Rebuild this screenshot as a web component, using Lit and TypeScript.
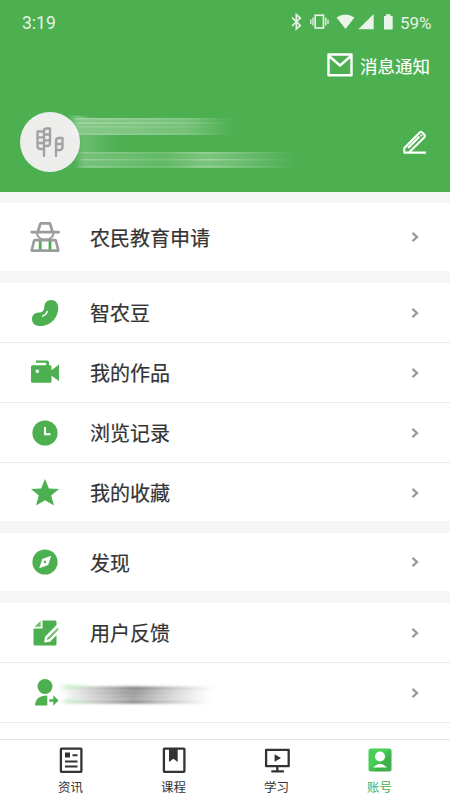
import { LitElement, html, svg, css, type TemplateResult } from "lit";
import { customElement } from "lit/decorators.js";

const G = "#4caf50";

const icons: Record<string, TemplateResult> = {
  farmer: svg`<g fill="none" stroke="#9c9c9c" stroke-width="2.700" stroke-linejoin="round" stroke-linecap="round">
    <path d="M-4.800 4v9M5 4v9" stroke="#4caf50" stroke-width="2.800" stroke-linecap="butt"/>
    <path d="M-8.200-4.500C-7.500 5 8 5 8.700-4.500" stroke-width="2.200"/>
    <path d="M-13.300-4.800h27M-7-5.500l2.200-7.500q.3-.6 1-.6h8q.7 0 1 .6l2.200 7.500"/>
    <path d="M-9.700 3.200h19.700q.8 0 1 .8l2.300 9.600h-26.600l2.300-9.600q.2-.8 1-.8z"/></g>`,
  bean: svg`<path fill=${G} d="M6-13c4.500 0 7.200 3.300 7.200 8.200C13.200 4.800 5.500 13-4.600 13-9.800 13-13 10.300-13 6.200c0-4 2.800-6.600 6.800-6.700C-2.700-.6-1-2.200-.8-5.500-.6-10.300 2.300-13 6-13z"/>
    <path d="M-2.200 3Q1.200 2 2.300-1.600" fill="none" stroke="#fff" stroke-width="1.500" stroke-linecap="round"/>`,
  camera: svg`<path fill=${G} fill-rule="evenodd" d="M-9-12.500H2q2 0 2 2v2.800h1q1.500 0 1.500 1.500v3.400L14-8.500v16.500l-7.500-5.300v5.500q0 1.500-1.500 1.500h-17.500q-1.500 0-1.500-1.500V-6.200q0-1.500 1.500-1.500h13.700v-2.500H-9zM-9.200-3.200v3h3v-3z"/>`,
  clock: svg`<circle r="12.600" fill=${G}/><path d="M0-6V1.200H5.500" fill="none" stroke="#fff" stroke-width="2"/>`,
  star: svg`<path fill=${G} d="M0-14L3.900-4.500 14-4 6.200 2.600 9 12.500 0 7.200-9 12.500-6.200 2.600-14-4-3.900-4.500z"/>`,
  compass: svg`<circle r="12.600" fill=${G}/><path d="M6.200-6.200L3.200 3-5.800 6.200-2.700-3z" fill="#fff"/><circle r="1.200" fill=${G}/>`,
  note: svg`<path fill=${G} d="M-2.500-12.500H10q1.500 0 1.500 1.500v3L0 3.800-.8 9.500 5 8.800 11.500 2.300V11q0 1.500-1.500 1.500h-20q-1.500 0-1.500-1.500V-4.500h9z"/>
    <path fill=${G} d="M-4.300-12.200v6h-6.200zM12.300-4.800q1.200 0 1.300 1.300L4.200 6.300 1.600 7 2.200 4.900z" opacity=".8"/>`,
  userOut: svg`<g fill=${G}><circle cx="0" cy="-6.500" r="7.500"/><path d="M-10 12.500Q-9.500 2.500 2.300 2.500V12.500zM4.300 6.200h4v-4l5.200 5.300-5.200 5.300v-4h-4z"/></g>`,
};

const tabIcons: TemplateResult[] = [
  svg`<g fill="none" stroke="#333" stroke-width="2.300"><rect x="-10.100" y="-11.300" width="20.500" height="23.200" rx=".6"/>
    <path d="M1.500-4.800h5M-6 1.500H6.500M-6 6.500H6.500" stroke-width="2"/><path fill="#333" stroke="none" d="M-6-7.500h5v5h-5z"/></g>`,
  svg`<rect x="-10.100" y="-11.300" width="20.500" height="23.200" rx=".6" fill="none" stroke="#333" stroke-width="2.300"/>
    <path fill="#333" d="M-5-11.300h8.700V2L-.6-1.200-5 2z"/>`,
  svg`<g transform="translate(.3 0)"><path d="M-11.200-10.200H11.400V6.200H-11.200zM0 6v5M-6 11.300H6.600" fill="none" stroke="#333" stroke-width="2.300" stroke-linejoin="round"/>
    <path fill="#333" d="M-2.700-5.700V1.700L3.700-2z"/></g>`,
  svg`<defs><linearGradient id="tile" x2="1" y2="1"><stop offset=".4" stop-color="#48cf57"/><stop offset=".65" stop-color="#3faf49"/></linearGradient></defs>
    <rect x="-11.500" y="-11.500" width="23" height="23" rx="2.500" fill="url(#tile)"/>
    <circle cy="-3.500" r="5" fill="#fff"/><path d="M-7 7.500Q0 .2 7 7.500z" fill="#fff"/>`,
];

const groups = [
  [["farmer", "农民教育申请"]],
  [["bean", "智农豆"], ["camera", "我的作品"], ["clock", "浏览记录"], ["star", "我的收藏"]],
  [["compass", "发现"]],
  [["note", "用户反馈"], ["userOut", ""]],
];
const tabs = ["资讯", "课程", "学习", "账号"];

@customElement("app-root")
export class AppRoot extends LitElement {
  static styles = css`
    :host { display: flex; flex-direction: column; width: 450px; height: 800px; overflow: hidden; background: #f6f6f6;
      font-family: Roboto, "Noto Sans CJK SC", sans-serif; color: #333; }
    svg { display: block; flex: none; overflow: visible; }
    header { height: 192px; flex: none; background: #4caf50; color: #fff; margin-bottom: 11px; }
    .status { display: flex; height: 44px; align-items: center; justify-content: space-between; padding: 0 17px 0 22px;
      color: #e4f3e4; font-size: 17.500px; box-sizing: border-box; }
    .status > span { padding-top: 2px; }
    .right { display: flex; align-items: center; gap: 6px; }
    .pct { font-size: 17px; padding-top: 2px; width: 33px; white-space: nowrap; }
    .notice { display: flex; height: 42px; align-items: center; justify-content: flex-end; gap: 7px; padding-right: 20px;
      font-size: 17.500px; -webkit-text-stroke: .15px; }
    .profile { display: flex; height: 60px; margin-top: 26px; padding: 0 23px 0 20px; align-items: center;
      justify-content: space-between; position: relative; }
    .avatar { width: 60px; height: 60px; border-radius: 50%; background: #ededec; }
    .smear { position: absolute; left: 60px; top: -4px; }
    .group { background: #fff; margin-bottom: 12px; flex: none; }
    .group.edu { padding: 4px 0; }
    .group.mid .row { height: 58px; }
    .group.last { margin: 0; flex: 1; }
    .row { display: flex; height: 60px; box-sizing: border-box; align-items: center; padding: 0 30px;
      border-bottom: 1px solid #ebebeb; position: relative; }
    .group:not(.last) .row:last-child { border-bottom: 0; }
    .group.list .row:last-child { height: 58px; padding-top: 1px; }
    .label { flex: 1; margin-left: 30px; font-size: 20px; line-height: 30px; padding-top: 3px; -webkit-text-stroke: .2px; }
    .mask { position: absolute; left: 58px; top: 14px; }
    nav { display: flex; height: 61px; flex: none; box-sizing: border-box; border-top: 1px solid #e6e6e6; background: #fff;
      padding: 0 19px; font-size: 12.500px; }
    .tab { flex: 1; display: flex; flex-direction: column; align-items: center; padding-top: 5px; line-height: 18px; gap: 4px; }
    .tab.on { color: #4caf50; }
  `;

  private row([icon, label]: string[]) {
    return html`<div class="row">
      <svg width="30" height="30" viewBox="-15 -15 30 30">${icons[icon]}</svg>
      <span class="label">${label}</span>
      <svg width="10" height="12" viewBox="0 0 10 12"><path d="M2.500 1.800L7 6 2.500 10.200" fill="none" stroke="#999" stroke-width="2.300"/></svg>
      ${label ? "" : this.mask()}
    </div>`;
  }

  private mask() {
    return svg`<svg class="mask" width="160" height="30" viewBox="0 0 160 30">
      <defs><linearGradient id="ink"><stop offset="0" stop-color="#777" stop-opacity="0"/><stop offset=".18" stop-color="#777" stop-opacity=".35"/>
        <stop offset=".48" stop-color="#555" stop-opacity=".75"/><stop offset=".7" stop-color="#777" stop-opacity=".45"/><stop offset="1" stop-color="#999" stop-opacity="0"/></linearGradient>
        <linearGradient id="mint"><stop offset="0" stop-color="#7ce07c" stop-opacity=".35"/><stop offset="1" stop-color="#7ce07c" stop-opacity="0"/></linearGradient>
        <filter id="soft" x="-10%" y="-30%" width="120%" height="160%"><feGaussianBlur stdDeviation="3 .8"/></filter></defs>
      <g filter="url(#soft)" fill="url(#ink)">
        <rect x="4" y="9" width="150" height="18" opacity=".65"/><rect x="8" y="10.500" width="150" height="2.200" opacity=".8"/>
        <rect x="4" y="15" width="140" height="1.500" opacity=".7"/><rect x="2" y="19" width="140" height="1.500" opacity=".4"/><rect x="4" y="24" width="150" height="2" opacity=".6"/>
        <g fill="url(#mint)"><rect x="5" y="7" width="30" height="6"/><rect x="7" y="22" width="30" height="5"/></g></g></svg>`;
  }

  private streaks() {
    return svg`<svg class="smear" width="260" height="64" viewBox="60 108 260 64">
      <defs><linearGradient id="s1"><stop offset="0" stop-color="#fff" stop-opacity=".5"/><stop offset=".3" stop-color="#fff" stop-opacity=".45"/>
        <stop offset=".7" stop-color="#fff" stop-opacity=".35"/><stop offset="1" stop-color="#fff" stop-opacity="0"/></linearGradient>
        <linearGradient id="s2"><stop offset="0" stop-color="#fff" stop-opacity=".4"/><stop offset=".38" stop-color="#fff" stop-opacity=".2"/>
        <stop offset=".58" stop-color="#fff" stop-opacity=".45"/><stop offset="1" stop-color="#fff" stop-opacity="0"/></linearGradient>
        <linearGradient id="s3"><stop offset="0" stop-color="#fff" stop-opacity=".4"/><stop offset="1" stop-color="#fff" stop-opacity="0"/></linearGradient>
        <filter id="haze" x="-10%" y="-30%" width="120%" height="160%"><feGaussianBlur stdDeviation="3 .6"/></filter></defs>
      <g filter="url(#haze)"><g fill="url(#s1)"><rect x="73" y="118" width="162" height="17" opacity=".65"/><rect x="73" y="118" width="155" height="1.500" opacity=".4"/>
        <rect x="76" y="122" width="160" height="2" opacity=".4"/><rect x="76" y="126" width="145" height="1.500" opacity=".3"/><rect x="78" y="133.500" width="155" height="1.200" opacity=".4"/></g>
        <g fill="url(#s2)"><rect x="79" y="152" width="220" height="16" opacity=".6"/><rect x="80" y="152" width="215" height="1.500" opacity=".5"/>
        <rect x="80" y="159" width="220" height="1.500" opacity=".6"/><rect x="80" y="166" width="220" height="1.500" opacity=".5"/></g>
        <g fill="url(#s3)"><path d="M72 115l24 3H75z"/><rect x="79" y="135" width="40" height="17" opacity=".5"/></g></g></svg>`;
  }

  render() {
    const cls = ["edu", "list", "mid", "last"];
    return html`
      <header>
        <div class="status"><span>3:19</span>
          <div class="right">
            <svg width="106" height="20" viewBox="288 11 106 20"><g fill="none" stroke="#e4f3e4" stroke-width="1.700">
              <path d="M292 16.500l8.300 8-4 3.500V13.500l4 3.500-8.300 8"/><rect x="315.200" y="14.200" width="8.300" height="12.800" stroke-width="1.700"/>
              <path d="M313 16.500v8M310.800 18.500v4.500M325.800 16.500v8M328 18.500v4.500" stroke-width="1.300"/></g>
              <g fill="#e9f5e9"><path d="M336.500 16.500Q345.500 10.500 354.500 16.500L345.500 28zM373.700 13V28.200H358.300zM386 13.200h4.500v1.800h1.500q.7 0 .7.700v12q0 .7-.7.700h-7.300q-.7 0-.7-.7v-12q0-.7.7-.7h1.300z"/></g></svg>
            <span class="pct">59%</span>
          </div>
        </div>
        <div class="notice">
          <svg width="26" height="24" viewBox="0 0 26 24"><path d="M1.500 1.500h23v20.800h-23zM2 3L13 12.500 24 3" fill="none" stroke="#fff" stroke-width="2.400" stroke-linejoin="round"/></svg>
          <span>消息通知</span>
        </div>
        <div class="profile">
          <svg class="avatar" viewBox="20 112 60 60"><g fill="none" stroke="#a1a1a1" stroke-width="2.300" stroke-linejoin="round" stroke-linecap="round">
            <path d="M44 156V131q0-2.500 2.500-2.500H50V143q0 3-3 3H44M44 131.500H37.500V146q0 3 3 3H44M37.500 137.300H44M37.500 143H44M44 134.500H50M44 140.300H50M56 156v-15q0-3 3-3H62.500V147q0 3-3 3H56M56 144H62"/></g></svg>
          ${this.streaks()}
          <svg width="24" height="24" viewBox="403 130 24 24"><path d="M426 152.600H404.300V148L420 132.300q1-.8 2 0l2.600 2.600q.9 1 0 2L409.500 152M408 148l11.500-11.500" fill="none" stroke="#fff" stroke-width="2.100" stroke-linejoin="round"/><circle cx="421.300" cy="135.500" r="1" fill="#fff"/></svg>
        </div>
      </header>
      ${groups.map((g, i) => html`<section class="group ${cls[i]}">${g.map((r) => this.row(r))}</section>`)}
      <nav>${tabs.map((t, i) => html`<div class="tab ${i === 3 ? "on" : ""}">
        <svg width="30" height="30" viewBox="-15 -15 30 30">${tabIcons[i]}</svg><span>${t}</span></div>`)}</nav>
    `;
  }
}
